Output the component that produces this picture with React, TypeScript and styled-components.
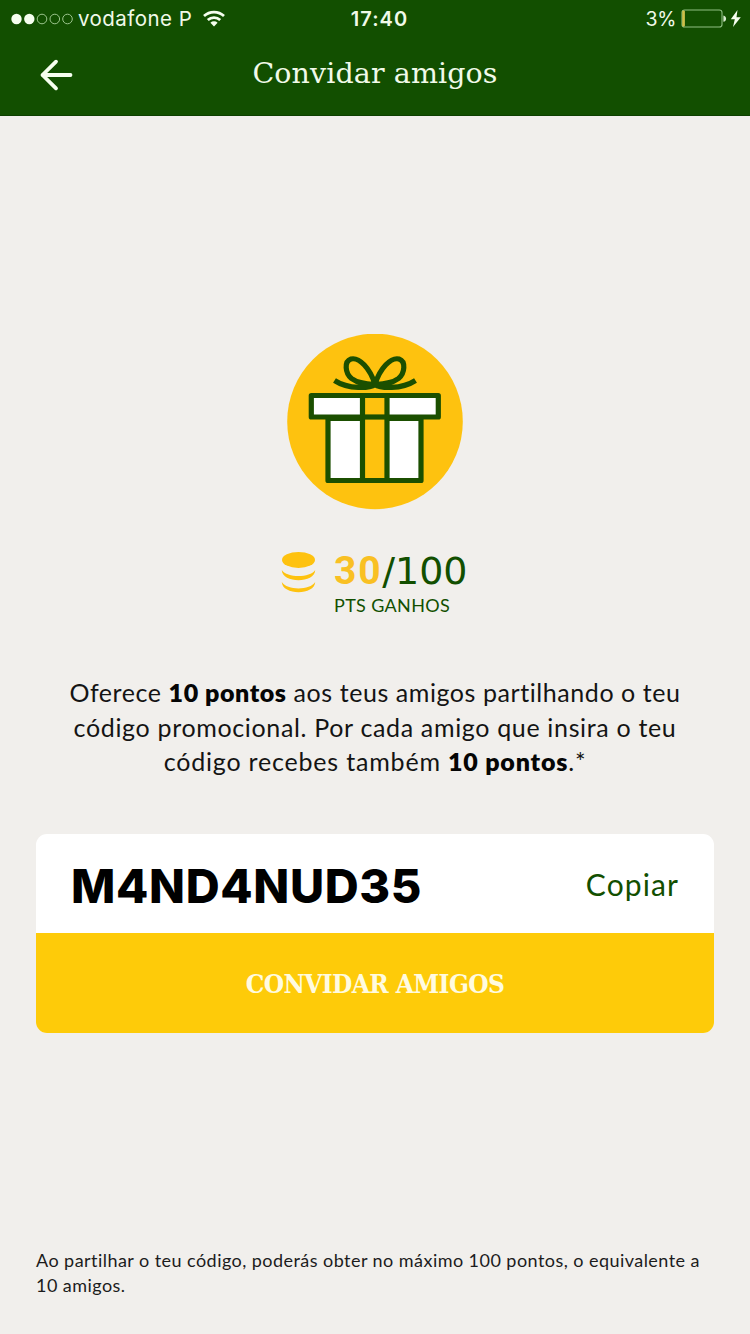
import React from "react";
import styled, { createGlobalStyle } from "styled-components";

const color = {
  green: "#124f00",
  page: "#f1efec",
  gold: "#fec20f",
  button: "#fecb09",
};

const GlobalStyle = createGlobalStyle`
  * { box-sizing: border-box; }
  body { margin: 0; background: ${color.page}; }
`;

const Screen = styled.div`
  display: flex;
  flex-direction: column;
  width: 750px;
  height: 1334px;
  background: ${color.page};
  font-family: Lato, sans-serif;
  color: #141414;
  overflow: hidden;
`;

const Header = styled.header`
  flex: none;
  height: 116px;
  background: ${color.green};
  border-bottom: 1px solid #0d3f00;
  color: #f1fae9;
`;

const StatusBar = styled.div`
  display: grid;
  grid-template-columns: 1fr auto 1fr;
  align-items: center;
  height: 38px;
  padding: 0 8px 0 11px;
  font: 400 20px/38px Inter, sans-serif;
`;

const StatusGroup = styled.div<{ $end?: boolean }>`
  display: flex;
  align-items: center;
  justify-content: ${(p) => (p.$end ? "flex-end" : "flex-start")};
`;

const Carrier = styled.span`
  margin: 0 11px 0 4px;
  font-size: 20.5px;
  letter-spacing: 0.45px;
`;

const Clock = styled.span`
  font-weight: 600;
  letter-spacing: 1.1px;
  padding-left: 6px;
`;

const Percent = styled.span`
  margin-right: 5px;
  font-size: 19.5px;
  letter-spacing: -0.3px;
`;

const NavBar = styled.div`
  display: grid;
  grid-template-columns: 74px 1fr 74px;
  align-items: center;
  height: 72px;
`;

const BackButton = styled.button`
  display: flex;
  height: 34px;
  margin-top: 2px;
  padding: 0 0 0 39px;
  border: 0;
  background: none;
  color: inherit;
`;

const Title = styled.h1`
  margin: 0;
  text-align: center;
  font: 400 28.5px/40px "DejaVu Serif", serif;
  letter-spacing: 0.1px;
`;

const Main = styled.main`
  display: flex;
  flex-direction: column;
  align-items: center;
  padding: 217.5px 36px 0;
`;

const Gift = styled.svg`
  display: block;
  flex: none;
`;

const Score = styled.section`
  display: flex;
  align-items: flex-start;
  gap: 18px;
  margin-top: 41.5px;
  width: 188px;
  height: 66px;
`;

const ScoreText = styled.div`
  color: ${color.green};
  white-space: nowrap;
`;

const Points = styled.div`
  font: 400 38px/42px "DejaVu Sans", sans-serif;
  letter-spacing: -0.1px;
  height: 41px;
  margin-top: -1px;
`;

const Earned = styled.b`
  color: #f9c023;
  font: 700 39px/42px Roboto, sans-serif;
  letter-spacing: 1.8px;
`;

const Caption = styled.div`
  margin-top: 2px;
  font-size: 18px;
  line-height: 24px;
  letter-spacing: 0.35px;
`;

const Pitch = styled.p`
  margin: 58px 0 0;
  font-size: 25px;
  line-height: 34.5px;
  text-align: center;
`;

const Line = styled.span<{ $tracking: number }>`
  display: block;
  white-space: nowrap;
  letter-spacing: ${(p) => p.$tracking}px;
`;

const Strong = styled.b`
  font-weight: 800;
  color: #050505;
`;

const CodeCard = styled.section`
  width: 678px;
  margin-top: 55.5px;
  border-radius: 11px;
  overflow: hidden;
  background: #fff;
`;

const CodeRow = styled.div`
  display: flex;
  align-items: center;
  justify-content: space-between;
  height: 99px;
  padding: 0 35px 0 35px;
`;

const Code = styled.span`
  color: #000;
  font: 800 47px/60px Inter, sans-serif;
  letter-spacing: 0.65px;
  padding-top: 4px;
`;

const CopyButton = styled.button`
  padding: 0;
  border: 0;
  background: none;
  color: ${color.green};
  font: 400 30px/40px Lato, sans-serif;
  letter-spacing: 1.1px;
`;

const InviteButton = styled.button`
  display: block;
  width: 100%;
  height: 100px;
  padding: 2px 0 0;
  border: 0;
  background: ${color.button};
  color: #fffbe0;
  font: 700 26px/40px "DejaVu Serif Condensed", "DejaVu Serif", serif;
  font-stretch: condensed;
  letter-spacing: -0.6px;
`;

const Footnote = styled.p`
  margin: auto 36px 36px;
  font-size: 18px;
  line-height: 25px;
  color: #1c1c1c;
`;

const SignalDots = () => (
  <svg width="63" height="14" viewBox="0 0 63 14">
    {[5.5, 18.3, 31, 43.8, 56.5].map((cx, i) => (
      <circle
        key={cx}
        cx={cx}
        cy="7"
        r={i < 2 ? 5.2 : 4.8}
        fill={i < 2 ? "#f6ffef" : "none"}
        stroke={i < 2 ? "none" : "#9cc58d"}
        strokeWidth="1"
      />
    ))}
  </svg>
);

const WifiIcon = () => (
  <svg width="22" height="18" viewBox="0 0 22 18" fill="none" stroke="#f6ffef" strokeWidth="2.7">
    <path d="M1 6.1a14.5 14.5 0 0 1 20 0" />
    <path d="M4.8 10.1a9 9 0 0 1 12.4 0" />
    <path d="M11 16.5l-3.6-3.7a5.2 5.2 0 0 1 7.2 0z" fill="#f6ffef" stroke="none" />
  </svg>
);

const BatteryIcon = () => (
  <svg width="49" height="20" viewBox="0 0 49 20">
    <rect x="1" y="1" width="40" height="17" rx="2.6" fill="none" stroke="#8fbf82" strokeWidth="1.1" />
    <rect x="1.2" y="1.5" width="2.7" height="16" rx="1" fill="#cfc04a" />
    <path d="M42.4 6.4c3.6.6 3.6 5.8 0 6.4z" fill="#d9edd0" />
  </svg>
);

const BoltIcon = () => (
  <svg width="12" height="20" viewBox="0 0 12 20">
    <path d="M7.5 1L.8 10.2h4L3 18l7.8-9.8H6.5z" fill="#f6ffef" />
  </svg>
);

const BackArrow = () => (
  <svg width="35" height="34" viewBox="0 0 35 34" fill="none" stroke="#f6ffef" strokeWidth="3.8" strokeLinecap="round" strokeLinejoin="round">
    <path d="M31.5 17H3.5M17 3.7L3.5 17L17 30.3" />
  </svg>
);

const GiftBadge = () => (
  <Gift width="176" height="176" viewBox="0 0 176 176">
    <circle cx="88" cy="87.5" r="87.8" fill={color.gold} />
    <g stroke="#1b4f00" strokeWidth="5.2" fill="none" strokeLinejoin="round">
      <path d="M41 84.5H134V146.5H41z" fill="#fff" />
      <path d="M24.3 61.5H151.3V83H24.3z" fill="#fff" />
      <path d="M75.5 61.5H100V146.5H75.5z" fill={color.gold} />
      <path d="M75.5 83H100" />
      <path d="M88 50.5C83 34 72 23 64 25C57 27.500 58 39 64.500 44.500C71 49.500 80 50 88 50.500C83 54 62 56 47.500 46.500" />
      <path d="M88 50.500C93 34 104 23 112 25C119 27.500 118 39 111.500 44.500C105 49.500 96 50 88 50.500C93 54 114 56 128.500 46.500" />
    </g>
  </Gift>
);

const CoinsIcon = () => (
  <svg width="35" height="42" viewBox="0 0 35 42" fill={color.gold}>
    <ellipse cx="17.5" cy="8.9" rx="16.5" ry="8" />
    <path d="M.8 19C6 27 29 27 34.2 19C34 32.6 1 32.6 .8 19z" />
    <path d="M.8 31C6 39.5 29 39.5 34.2 31C34 44.5 1 44.5 .8 31z" />
  </svg>
);

export default function App() {
  return (
    <>
      <GlobalStyle />
      <Screen>
        <Header>
          <StatusBar>
            <StatusGroup>
              <SignalDots />
              <Carrier>vodafone P</Carrier>
              <WifiIcon />
            </StatusGroup>
            <Clock>17:40</Clock>
            <StatusGroup $end>
              <Percent>3%</Percent>
              <BatteryIcon />
              <BoltIcon />
            </StatusGroup>
          </StatusBar>
          <NavBar>
            <BackButton aria-label="Voltar">
              <BackArrow />
            </BackButton>
            <Title>Convidar amigos</Title>
          </NavBar>
        </Header>
        <Main>
          <GiftBadge />
          <Score>
            <CoinsIcon />
            <ScoreText>
              <Points>
                <Earned>30</Earned>/100
              </Points>
              <Caption>PTS GANHOS</Caption>
            </ScoreText>
          </Score>
          <Pitch>
            <Line $tracking={0.57}>
              Oferece <Strong>10 pontos</Strong> aos teus amigos partilhando o teu
            </Line>
            <Line $tracking={0.66}>código promocional. Por cada amigo que insira o teu</Line>
            <Line $tracking={0.81}>
              código recebes também <Strong>10 pontos</Strong>.*
            </Line>
          </Pitch>
          <CodeCard>
            <CodeRow>
              <Code>M4ND4NUD35</Code>
              <CopyButton>Copiar</CopyButton>
            </CodeRow>
            <InviteButton>CONVIDAR AMIGOS</InviteButton>
          </CodeCard>
        </Main>
        <Footnote>
          <Line $tracking={0.45}>Ao partilhar o teu código, poderás obter no máximo 100 pontos, o equivalente a</Line>
          <Line $tracking={0.45}>10 amigos.</Line>
        </Footnote>
      </Screen>
    </>
  );
}
